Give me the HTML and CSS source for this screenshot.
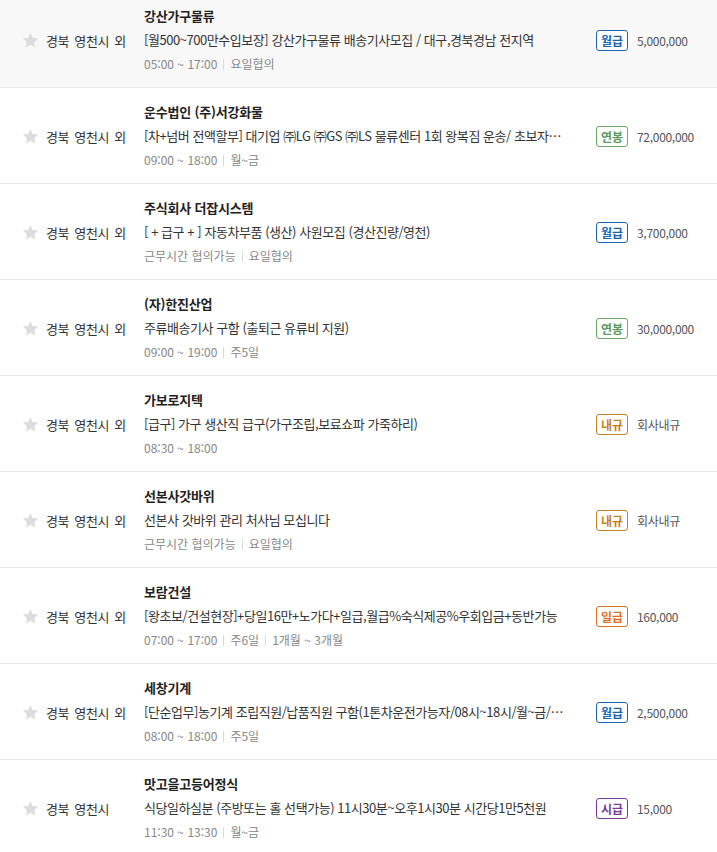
FILE: index.html
```html
<!DOCTYPE html>
<html lang="ko">
<head>
<meta charset="utf-8">
<link rel="stylesheet" href="styles.css">
</head>
<body>
<ul class="list">
  <li class="row row-active">
    <span class="star"><svg viewBox="0 0 24 24"><path d="M12 2.5l2.9 6.3 6.9.7-5.2 4.6 1.5 6.8L12 17.4l-6.1 3.5 1.5-6.8L2.2 9.5l6.9-.7z"/></svg></span>
    <span class="loc">경북 영천시 외</span>
    <div class="info">
      <div class="title">강산가구물류</div>
      <div class="desc">[월500~700만수입보장] 강산가구물류 배송기사모집 / 대구,경북경남 전지역</div>
      <div class="meta"><span>05:00 ~ 17:00</span><i class="sep"></i><span>요일협의</span></div>
    </div>
    <div class="pay"><span class="badge b-month">월급</span><span class="amt">5,000,000</span></div>
  </li>
  <li class="row">
    <span class="star"><svg viewBox="0 0 24 24"><path d="M12 2.5l2.9 6.3 6.9.7-5.2 4.6 1.5 6.8L12 17.4l-6.1 3.5 1.5-6.8L2.2 9.5l6.9-.7z"/></svg></span>
    <span class="loc">경북 영천시 외</span>
    <div class="info">
      <div class="title">운수법인 (주)서강화물</div>
      <div class="desc">[차+넘버 전액할부] 대기업 ㈜LG ㈜GS ㈜LS 물류센터 1회 왕복짐 운송/ 초보자가능 고수익 보장</div>
      <div class="meta"><span>09:00 ~ 18:00</span><i class="sep"></i><span>월~금</span></div>
    </div>
    <div class="pay"><span class="badge b-year">연봉</span><span class="amt">72,000,000</span></div>
  </li>
  <li class="row">
    <span class="star"><svg viewBox="0 0 24 24"><path d="M12 2.5l2.9 6.3 6.9.7-5.2 4.6 1.5 6.8L12 17.4l-6.1 3.5 1.5-6.8L2.2 9.5l6.9-.7z"/></svg></span>
    <span class="loc">경북 영천시 외</span>
    <div class="info">
      <div class="title">주식회사 더잡시스템</div>
      <div class="desc">[ + 급구 + ] 자동차부품 (생산) 사원모집 (경산진량/영천)</div>
      <div class="meta"><span>근무시간 협의가능</span><i class="sep"></i><span>요일협의</span></div>
    </div>
    <div class="pay"><span class="badge b-month">월급</span><span class="amt">3,700,000</span></div>
  </li>
  <li class="row">
    <span class="star"><svg viewBox="0 0 24 24"><path d="M12 2.5l2.9 6.3 6.9.7-5.2 4.6 1.5 6.8L12 17.4l-6.1 3.5 1.5-6.8L2.2 9.5l6.9-.7z"/></svg></span>
    <span class="loc">경북 영천시 외</span>
    <div class="info">
      <div class="title">(자)한진산업</div>
      <div class="desc">주류배송기사 구함 (출퇴근 유류비 지원)</div>
      <div class="meta"><span>09:00 ~ 19:00</span><i class="sep"></i><span>주5일</span></div>
    </div>
    <div class="pay"><span class="badge b-year">연봉</span><span class="amt">30,000,000</span></div>
  </li>
  <li class="row">
    <span class="star"><svg viewBox="0 0 24 24"><path d="M12 2.5l2.9 6.3 6.9.7-5.2 4.6 1.5 6.8L12 17.4l-6.1 3.5 1.5-6.8L2.2 9.5l6.9-.7z"/></svg></span>
    <span class="loc">경북 영천시 외</span>
    <div class="info">
      <div class="title">가보로지텍</div>
      <div class="desc">[급구] 가구 생산직 급구(가구조립,보료쇼파 가죽하리)</div>
      <div class="meta"><span>08:30 ~ 18:00</span></div>
    </div>
    <div class="pay"><span class="badge b-rule">내규</span><span class="amt">회사내규</span></div>
  </li>
  <li class="row">
    <span class="star"><svg viewBox="0 0 24 24"><path d="M12 2.5l2.9 6.3 6.9.7-5.2 4.6 1.5 6.8L12 17.4l-6.1 3.5 1.5-6.8L2.2 9.5l6.9-.7z"/></svg></span>
    <span class="loc">경북 영천시 외</span>
    <div class="info">
      <div class="title">선본사갓바위</div>
      <div class="desc">선본사 갓바위 관리 처사님 모십니다</div>
      <div class="meta"><span>근무시간 협의가능</span><i class="sep"></i><span>요일협의</span></div>
    </div>
    <div class="pay"><span class="badge b-rule">내규</span><span class="amt">회사내규</span></div>
  </li>
  <li class="row">
    <span class="star"><svg viewBox="0 0 24 24"><path d="M12 2.5l2.9 6.3 6.9.7-5.2 4.6 1.5 6.8L12 17.4l-6.1 3.5 1.5-6.8L2.2 9.5l6.9-.7z"/></svg></span>
    <span class="loc">경북 영천시 외</span>
    <div class="info">
      <div class="title">보람건설</div>
      <div class="desc">[왕초보/건설현장]+당일16만+노가다+일급,월급%숙식제공%우회입금+동반가능</div>
      <div class="meta"><span>07:00 ~ 17:00</span><i class="sep"></i><span>주6일</span><i class="sep"></i><span>1개월 ~ 3개월</span></div>
    </div>
    <div class="pay"><span class="badge b-day">일급</span><span class="amt">160,000</span></div>
  </li>
  <li class="row">
    <span class="star"><svg viewBox="0 0 24 24"><path d="M12 2.5l2.9 6.3 6.9.7-5.2 4.6 1.5 6.8L12 17.4l-6.1 3.5 1.5-6.8L2.2 9.5l6.9-.7z"/></svg></span>
    <span class="loc">경북 영천시 외</span>
    <div class="info">
      <div class="title">세창기계</div>
      <div class="desc">[단순업무]농기계 조립직원/납품직원 구함(1톤차운전가능자/08시~18시/월~금/토요일격주)</div>
      <div class="meta"><span>08:00 ~ 18:00</span><i class="sep"></i><span>주5일</span></div>
    </div>
    <div class="pay"><span class="badge b-month">월급</span><span class="amt">2,500,000</span></div>
  </li>
  <li class="row">
    <span class="star"><svg viewBox="0 0 24 24"><path d="M12 2.5l2.9 6.3 6.9.7-5.2 4.6 1.5 6.8L12 17.4l-6.1 3.5 1.5-6.8L2.2 9.5l6.9-.7z"/></svg></span>
    <span class="loc">경북 영천시</span>
    <div class="info">
      <div class="title">맛고을고등어정식</div>
      <div class="desc">식당일하실분 (주방또는 홀 선택가능) 11시30분~오후1시30분 시간당1만5천원</div>
      <div class="meta"><span>11:30 ~ 13:30</span><i class="sep"></i><span>월~금</span></div>
    </div>
    <div class="pay"><span class="badge b-hour">시급</span><span class="amt">15,000</span></div>
  </li>
</ul>
</body>
</html>
```
FILE: styles.css
```css
* { box-sizing: border-box; }
html, body { margin: 0; padding: 0; background: #fff; }
body {
  font-family: "Noto Sans CJK KR", "Noto Sans", sans-serif;
  color: #333;
  font-size: 13px;
}
.list {
  list-style: none;
  margin: -8px 0 0;
  padding: 0;
}
.row {
  display: flex;
  align-items: center;
  height: 96px;
  padding: 12px 0 11px;
  border-bottom: 1px solid #e9e9e9;
  background: #fff;
}
.row > * { flex: none; }
.row-active { background: #f8f8f8; }
.star {
  width: 19px;
  height: 19px;
  margin-left: 21px;
  display: flex;
}
.star svg { width: 19px; height: 19px; fill: #dcdcdc; }
.loc {
  width: 98px;
  margin-left: 6px;
  font-size: 13px;
  color: #333;
  letter-spacing: -0.4px;
  word-spacing: 2px;
  white-space: nowrap;
}
.info {
  width: 452px;
  display: flex;
  flex-direction: column;
}
.title, .desc, .meta {
  height: 24px;
  line-height: 24px;
  white-space: nowrap;
  overflow: hidden;
}
.title {
  font-weight: 700;
  font-size: 13px;
  color: #222;
  letter-spacing: -0.2px;
}
.desc {
  width: 426px;
  text-overflow: ellipsis;
  color: #333;
  letter-spacing: -0.45px;
}
.meta {
  font-size: 12px;
  color: #888;
  display: flex;
  align-items: center;
}
.sep {
  display: inline-block;
  width: 1px;
  height: 11px;
  background: #ddd;
  margin: 0 6px;
}
.pay {
  display: flex;
  align-items: center;
}
.badge {
  display: inline-flex;
  align-items: center;
  justify-content: center;
  width: 32px;
  height: 21px;
  border: 1px solid;
  border-radius: 3px;
  font-size: 12px;
  font-weight: 700;
  background: #fff;
}
.b-month { color: #1b64b0; border-color: #1b64b0; }
.b-year { color: #5d9a5d; border-color: #6fa86f; }
.b-rule { color: #c7811f; border-color: #c7811f; }
.b-day { color: #e0701e; border-color: #e0701e; }
.b-hour { color: #7a3a98; border-color: #7a3a98; }
.amt {
  margin-left: 9px;
  font-size: 12px;
  color: #555;
  letter-spacing: -0.3px;
}
```
